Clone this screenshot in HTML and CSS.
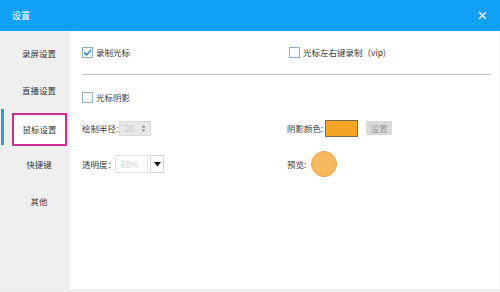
FILE: index.html
```html
<!DOCTYPE html>
<html>
<head>
<meta charset="utf-8">
<link rel="stylesheet" href="styles.css">
</head>
<body>
<div class="window">
  <div class="titlebar">
    <span class="title">设置</span>
    <svg class="close" width="9" height="9" viewBox="0 0 9 9"><path d="M1 1L8 8M8 1L1 8" stroke="#fff" stroke-width="1.4" fill="none"/></svg>
  </div>
  <div class="body">
    <div class="sidebar">
      <div class="item">录屏设置</div>
      <div class="item">直播设置</div>
      <div class="item active"><span class="mark">鼠标设置</span></div>
      <div class="item">快捷键</div>
      <div class="item">其他</div>
    </div>
    <div class="content">
      <div class="row r1">
        <div class="cell left">
          <span class="cb checked"><svg width="9" height="9" viewBox="0 0 9 9"><path d="M1.3 4.6L3.6 6.9L7.9 1.9" stroke="#2e7fd0" stroke-width="1.5" fill="none"/></svg></span>
          <span class="lbl">录制光标</span>
        </div>
        <div class="cell right">
          <span class="cb"></span>
          <span class="lbl">光标左右键录制（vip)</span>
        </div>
      </div>
      <div class="hr"></div>
      <div class="row r2">
        <div class="cell left">
          <span class="cb"></span>
          <span class="lbl">光标阴影</span>
        </div>
      </div>
      <div class="row r3">
        <div class="cell left">
          <span class="label">绘制半径:</span>
          <span class="spin"><span class="val">20</span>
            <svg class="arrows" width="5" height="9" viewBox="0 0 5 9"><path d="M0.5 3.5L2.5 1L4.5 3.5ZM0.5 5.5L2.5 8L4.5 5.5Z" fill="#8a8a8a"/></svg>
          </span>
        </div>
        <div class="cell right">
          <span class="label">阴影颜色:</span>
          <span class="swatch"></span>
          <span class="btn">设置</span>
        </div>
      </div>
      <div class="row r4">
        <div class="cell left">
          <span class="label tight">透明度：</span>
          <span class="field">60%</span>
          <span class="drop"><svg width="7" height="5" viewBox="0 0 7 5"><path d="M0 0H7L3.5 4.5Z" fill="#111"/></svg></span>
        </div>
        <div class="cell right">
          <span class="label">预览:</span>
          <span class="preview"></span>
        </div>
      </div>
    </div>
  </div>
  <div class="bottom"></div>
</div>
</body>
</html>
```
FILE: styles.css
```css
html, body {
  margin: 0;
  padding: 0;
  background: #fff;
}
body {
  font-family: "Noto Sans CJK SC", "Liberation Sans", sans-serif;
  font-size: 8.5px;
  color: #3a3a3a;
}
.window {
  width: 500px;
  height: 292px;
  display: flex;
  flex-direction: column;
}
.titlebar {
  height: 31px;
  background: #10a1f7;
  display: flex;
  align-items: center;
  justify-content: space-between;
  padding: 0 13px 0 12px;
  color: #fff;
}
.title {
  font-size: 9px;
}
.close {
  display: block;
}
.body {
  height: 258px;
  display: flex;
}
.bottom {
  height: 3px;
  background: #eeeeee;
}
.sidebar {
  width: 70px;
  background: #efefef;
  padding-top: 3px;
  box-sizing: border-box;
}
.item {
  height: 37px;
  display: flex;
  align-items: center;
  justify-content: center;
  padding-left: 8px;
  box-sizing: border-box;
  position: relative;
}
.item.active::before {
  content: "";
  position: absolute;
  left: 1px;
  top: 1px;
  width: 3px;
  height: 36px;
  background: #2a9fe0;
}
.item.active {
  padding-left: 9px;
  padding-top: 5px;
}
.mark {
  width: 55px;
  height: 33px;
  box-sizing: border-box;
  border: 2px solid #cc2f8f;
  background: #fff;
  display: flex;
  align-items: center;
  justify-content: center;
}
.content {
  flex: 1;
  padding: 13px 8px 0 12px;
  border-right: 1px solid #f2f2f2;
}
.row {
  display: flex;
  align-items: center;
}
.r1 { height: 16px; }
.r2 { height: 16px; margin-top: 14px; }
.r3 { height: 18px; margin-top: 14px; }
.r4 { height: 18px; margin-top: 18px; }
.hr {
  height: 1px;
  background: #c2c2c2;
  margin-top: 14px;
}
.cell {
  display: flex;
  align-items: center;
}
.cell.left { width: 205px; }
.r1 .cell.right, .r2 .cell.right { padding-left: 2px; }
.cb {
  width: 11px;
  height: 11px;
  box-sizing: border-box;
  border: 1px solid #8fb0cc;
  background: #fff;
  display: flex;
  align-items: center;
  justify-content: center;
  margin-right: 3px;
}
.label {
  margin-right: 1px;
}
.label.tight {
  margin-right: -1px;
}
.spin {
  width: 32px;
  height: 15px;
  box-sizing: border-box;
  background: #e8e8e8;
  border: 1px solid #dadada;
  display: flex;
  align-items: center;
  justify-content: space-between;
  padding: 0 4px 0 4px;
  color: #c4c4c4;
}
.arrows { display: block; }
.field {
  width: 33px;
  height: 18px;
  box-sizing: border-box;
  border: 1px solid #e0e0e0;
  display: flex;
  align-items: center;
  padding-left: 5px;
  color: #cdcdcd;
}
.drop {
  width: 14px;
  height: 18px;
  box-sizing: border-box;
  border: 1px solid #d6d6d6;
  margin-left: 2px;
  display: flex;
  align-items: center;
  justify-content: center;
}
.drop svg { display: block; }
.swatch {
  width: 33px;
  height: 17px;
  box-sizing: border-box;
  background: #f5a525;
  border: 1px solid #7d6a50;
  margin-left: 1px;
}
.btn {
  width: 26px;
  height: 14px;
  margin-left: 8px;
  background: #d9d9d9;
  color: #9a9a9a;
  display: flex;
  align-items: center;
  justify-content: center;
}
.preview {
  width: 26px;
  height: 26px;
  box-sizing: border-box;
  border-radius: 50%;
  background: #f6b95e;
  border: 1px solid #e3a64c;
  margin-left: 4px;
}
```
